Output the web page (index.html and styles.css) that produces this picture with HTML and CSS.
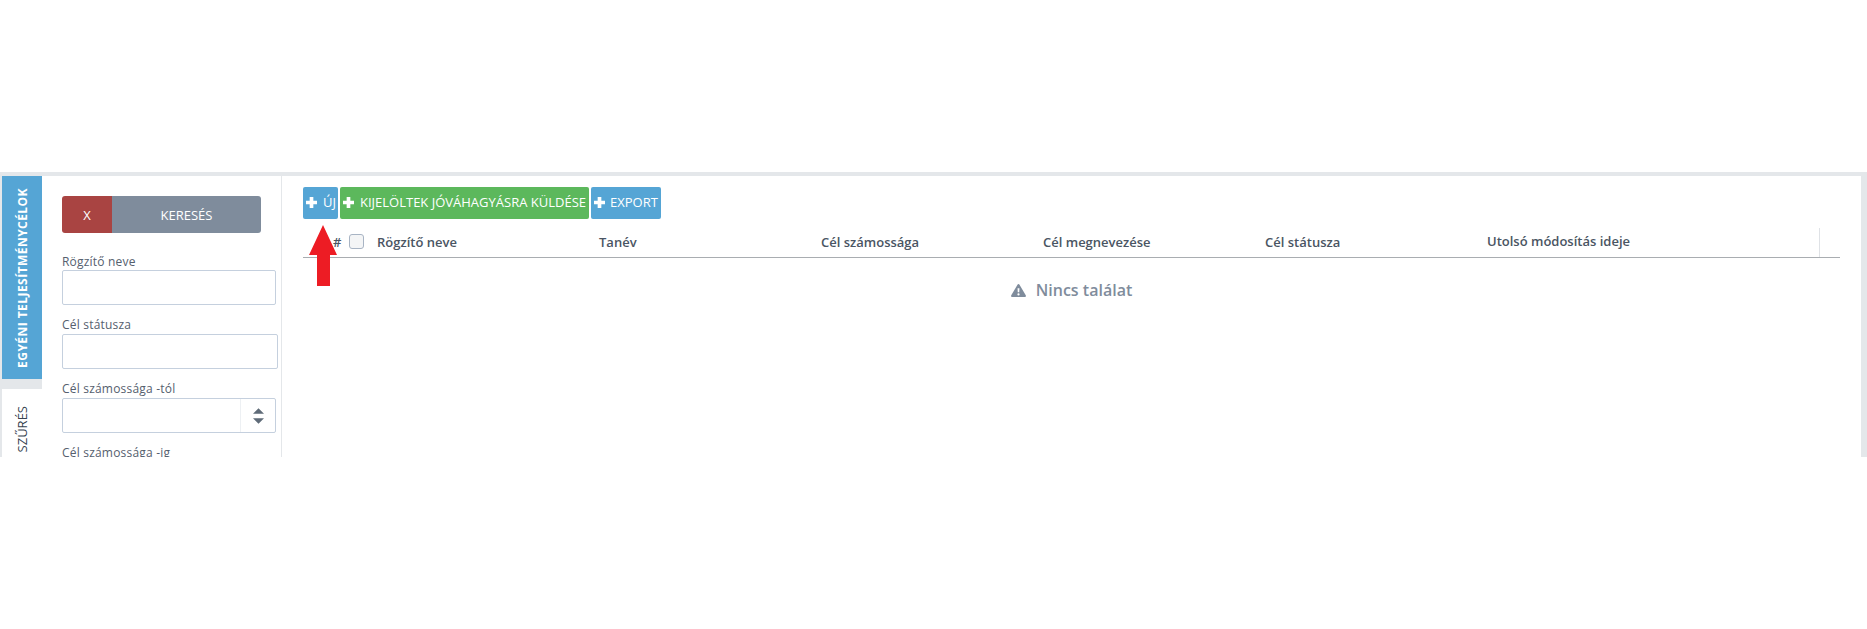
FILE: index.html
```html
<!DOCTYPE html>
<html lang="hu">
<head>
<meta charset="utf-8">
<title>Egyéni teljesítménycélok</title>
<link rel="stylesheet" href="styles.css">
</head>
<body>
<div class="frame">
  <nav class="tabs">
    <div class="tab tab-active"><span>EGYÉNI TELJESÍTMÉNYCÉLOK</span></div>
    <div class="tab tab-plain"><span>SZŰRÉS</span></div>
  </nav>
  <aside class="filters">
    <div class="search-buttons">
      <button class="btn-clear">X</button>
      <button class="btn-search">KERESÉS</button>
    </div>
    <label class="field-label label-first">Rögzítő neve</label>
    <div class="input"></div>
    <label class="field-label">Cél státusza</label>
    <div class="input input-wide"></div>
    <label class="field-label">Cél számossága -tól</label>
    <div class="input input-number">
      <div class="spin">
        <svg width="11" height="16" viewBox="0 0 12 17"><path class="spin-arrow" d="M6 0l6 6H0zM0 11h12l-6 6z"/></svg>
      </div>
    </div>
    <label class="field-label">Cél számossága -ig</label>
  </aside>
  <main class="content">
    <div class="toolbar">
      <button class="btn btn-blue btn-uj"><svg class="plus" viewBox="0 0 12 12"><path d="M4 0h4v4h4v4H8v4H4V8H0V4h4z"/></svg>ÚJ</button>
      <button class="btn btn-green"><svg class="plus" viewBox="0 0 12 12"><path d="M4 0h4v4h4v4H8v4H4V8H0V4h4z"/></svg>KIJELÖLTEK JÓVÁHAGYÁSRA KÜLDÉSE</button>
      <button class="btn btn-blue btn-export"><svg class="plus" viewBox="0 0 12 12"><path d="M4 0h4v4h4v4H8v4H4V8H0V4h4z"/></svg>EXPORT</button>
    </div>
    <div class="grid-head">
      <div class="col-check"><span class="hash">#</span><span class="checkbox"></span></div>
      <div class="col">Rögzítő neve</div>
      <div class="col">Tanév</div>
      <div class="col">Cél számossága</div>
      <div class="col">Cél megnevezése</div>
      <div class="col">Cél státusza</div>
      <div class="col col-last">Utolsó módosítás ideje</div>
    </div>
    <div class="empty">
      <svg class="warn" viewBox="0 0 16 14"><path fill-rule="evenodd" d="M8 0c.5 0 .9.3 1.100.7l6.700 11.500c.5.8-.1 1.800-1.100 1.800H1.300C.3 14-.3 13 .2 12.200L6.900.7C7.100.3 7.500 0 8 0zM7 4.500l.2 4.500h1.600L9 4.500zM8 10a1.200 1.200 0 1 0 0 2.400A1.200 1.200 0 0 0 8 10z"/></svg>
      <span>Nincs találat</span>
    </div>
  </main>
  <svg class="annotation" width="28" height="61" viewBox="0 0 28 61"><path d="M14 0l14 30h-7v31H8V30H0z"/></svg>
</div>
</body>
</html>
```
FILE: styles.css
```css
* { box-sizing: border-box; }
html, body { margin: 0; padding: 0; background: #fff; }
body { font-family: "Open Sans", sans-serif; color: #3e4b5b; }
.frame {
  position: relative;
  display: flex;
  margin-top: 172px;
  height: 285px;
  overflow: hidden;
  background: #e4e7ea;
  padding: 4px 6px 0 2px;
}
.tabs { width: 40px; flex: none; display: flex; flex-direction: column; }
.tab { flex: none; width: 40px; display: flex; align-items: center; justify-content: center; }
.tab span { writing-mode: vertical-rl; transform: rotate(180deg); white-space: nowrap; }
.tab-active { height: 203px; background: #55a5d5; color: #fff; font-size: 12px; font-weight: 700; letter-spacing: .45px; }
.tab-plain { height: 120px; margin-top: 10px; background: #fff; color: #36424f; font-size: 13px; align-items: flex-start; padding-top: 17px; }
.filters {
  width: 240px; flex: none; background: #fff;
  border-right: 1px solid #e4e7ea;
  padding: 20px 0 0 20px;
}
.search-buttons { display: flex; width: 199px; height: 37px; border-radius: 3px; overflow: hidden; }
.search-buttons button { border: 0; padding: 0; color: #fff; font: 13px "Open Sans", sans-serif; }
.btn-clear { width: 50px; background: #a94442; }
.btn-search { flex: 1; background: #7f8c9c; }
.field-label { display: block; height: 19px; margin-top: 10px; padding-top: 1px; font-size: 12px; letter-spacing: .2px; line-height: 18px; color: #55606e; }
.label-first { margin-top: 18px; padding-top: 2px; }
.input { width: 214px; height: 35px; background: #fff; border: 1px solid #c5d0de; border-radius: 2px; }
.input-wide { width: 216px; }
.input-number { display: flex; justify-content: flex-end; }
.spin { width: 35px; border-left: 1px solid #edf0f3; display: flex; align-items: center; justify-content: center; }
.spin-arrow { fill: #5f6b78; }
.content { flex: 1; min-width: 0; background: #fff; padding: 11px 21px 0 21px; }
.toolbar { display: flex; gap: 2px; height: 32px; }
.btn {
  display: flex; align-items: center; gap: 6px; height: 32px; padding: 0 3px 2px;
  border: 0; border-radius: 2px; color: #fff;
  font: 13px "Open Sans", sans-serif; white-space: nowrap;
}
.btn-blue { background: #55a5d5; }
.btn-green { background: #5cb85c; }
.btn-uj { width: 35px; }
.btn-export { gap: 5px; }
.plus { width: 11px; height: 11px; fill: #fff; flex: none; }
.grid-head {
  display: grid;
  grid-template-columns: 67px repeat(5, 222px) 340px;
  margin-top: 9px; height: 30px;
  border-bottom: 1px solid #a9adb1;
  font-size: 13px; font-weight: 600; color: #4a5563;
  align-items: center;
}
.col { padding-left: 7px; padding-bottom: 1px; white-space: nowrap; }
.col-last { height: 29px; line-height: 27px; padding-bottom: 0; border-right: 1px solid #dfe2e6; }
.col-check { display: flex; align-items: center; padding-bottom: 2px; }
.hash { margin-left: 30px; width: 16px; }
.checkbox { width: 15px; height: 15px; border: 1px solid #a8b4c4; border-radius: 3px; background: #f4f5f6; }
.empty {
  display: flex; align-items: center; justify-content: center; gap: 10px;
  margin-top: 21px;
  font-size: 16px; font-weight: 600; color: #7f8c9c;
}
.warn { width: 15px; height: 13px; fill: #7f8c9c; }
.annotation { position: absolute; left: 309px; top: 53px; fill: #ed1c24; }
```
